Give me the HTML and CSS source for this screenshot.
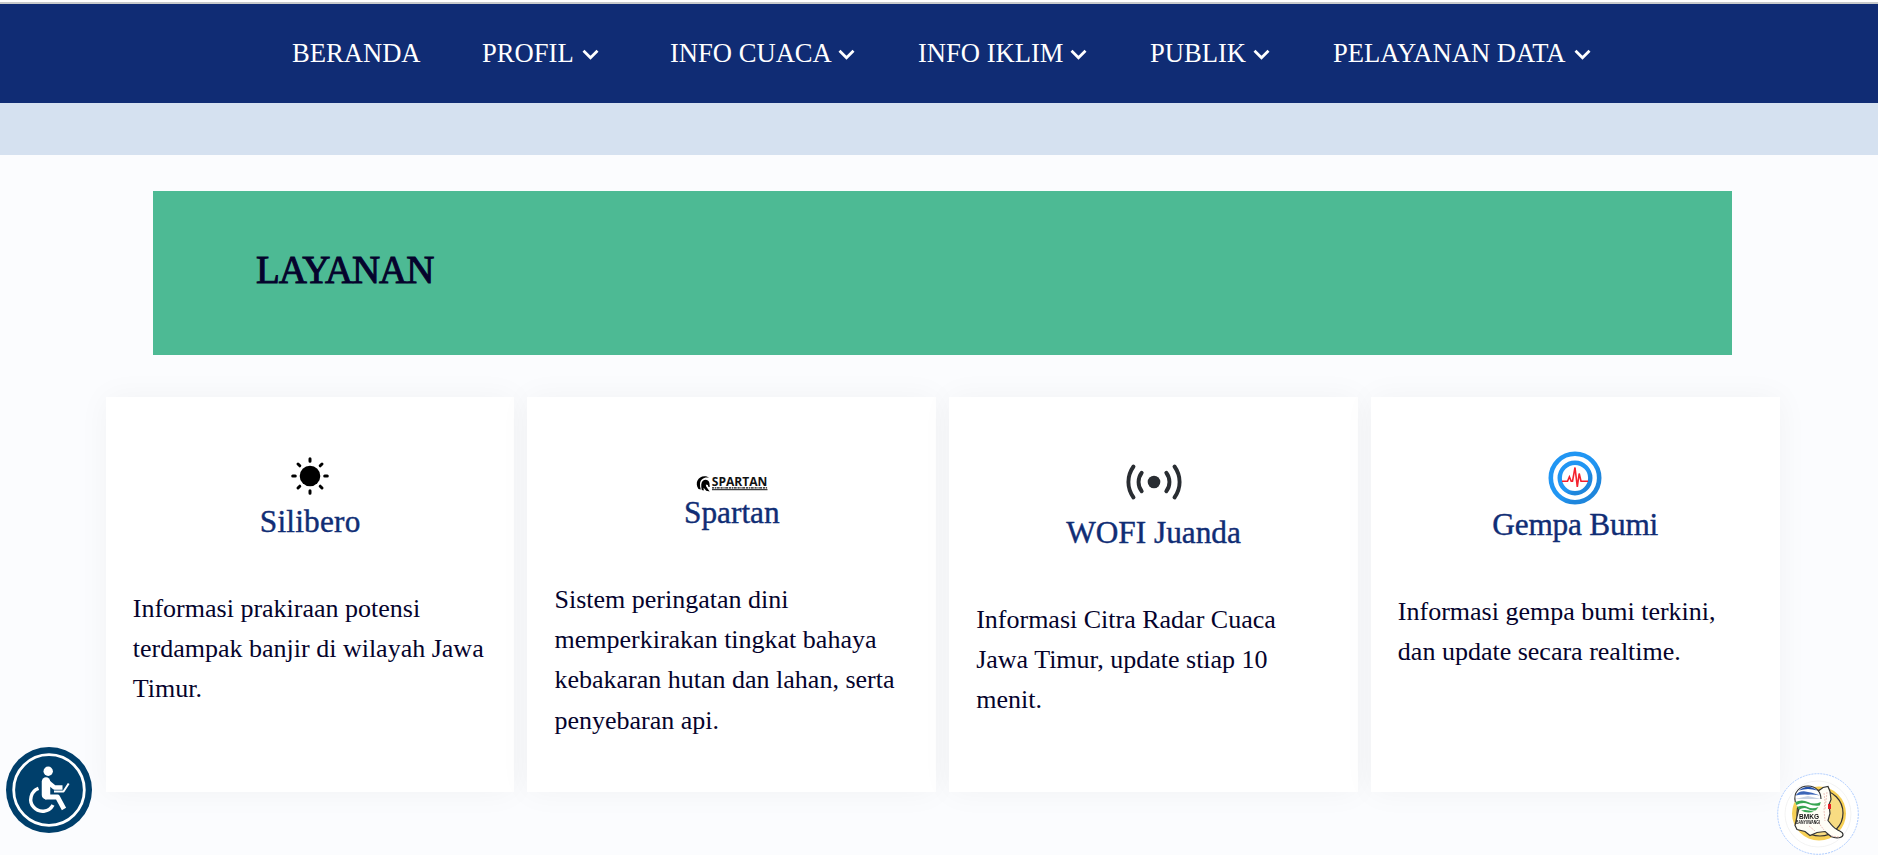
FILE: index.html
```html
<!DOCTYPE html>
<html lang="id">
<head>
<meta charset="utf-8">
<title>Layanan</title>
<link rel="stylesheet" href="styles.css">
</head>
<body>
<header class="navbar">
  <nav class="menu">
    <a class="item">BERANDA</a>
    <a class="item profil">PROFIL<svg class="chev" viewBox="0 0 17 11"><path d="M1.500 1.800l7 7 7-7"/></svg></a>
    <a class="item cuaca">INFO CUACA<svg class="chev" viewBox="0 0 17 11"><path d="M1.500 1.800l7 7 7-7"/></svg></a>
    <a class="item iklim">INFO IKLIM<svg class="chev" viewBox="0 0 17 11"><path d="M1.500 1.800l7 7 7-7"/></svg></a>
    <a class="item publik">PUBLIK<svg class="chev" viewBox="0 0 17 11"><path d="M1.500 1.800l7 7 7-7"/></svg></a>
    <a class="item data">PELAYANAN DATA<svg class="chev" viewBox="0 0 17 11"><path d="M1.500 1.800l7 7 7-7"/></svg></a>
  </nav>
</header>
<div class="band"></div>
<main>
  <section class="banner"><h2>LAYANAN</h2></section>
  <section class="cards">
    <article class="card silibero">
      <svg class="icon" width="40" height="40" viewBox="-20 -20 40 40">
        <circle r="10.300"/>
        <g stroke="#000" stroke-width="3" stroke-linecap="round">
          <path d="M0-17.300v2.600M0 14.700v2.600M-17.300 0h2.600M14.700 0h2.600M-12-12l1.800 1.800M10.200 10.200l1.800 1.800M-12 12l1.800-1.800M10.200-10.200l1.800-1.800"/>
        </g>
      </svg>
      <h3>Silibero</h3>
      <p>Informasi prakiraan potensi terdampak banjir di wilayah Jawa Timur.</p>
    </article>
    <article class="card spartan">
      <svg class="icon" width="72" height="16" viewBox="0 0 72 16">
        <path d="M2.500 13C-1.500 7 2 .2 8.500.2c2.200 0 3.800.6 4.500 1.500-5-.9-8.500 1.600-9 6-.1 2 .2 4 .8 5.800z"/>
        <path d="M5.800 14c-1-4.500-.8-8 1.400-9.600 2.300-1.500 5.600-.4 6.200 2.600l.4 4-1.500-.3-.5-1.700-2-.5.4 2 1.700 2.500 1.800 2.500-3.500-.8-2.600-3 .2 2.800z"/>
        <text class="wordmark" x="15.800" y="10" textLength="55.500" lengthAdjust="spacingAndGlyphs">SPARTAN</text>
        <path d="M16 11.800h55.500" stroke="#111" stroke-width="1.300" stroke-dasharray="2.200 .7 1.200 .6 3 .8"/>
        <path d="M16 13.700h55.500" stroke="#111" stroke-width="1"/>
      </svg>
      <h3>Spartan</h3>
      <p>Sistem peringatan dini memperkirakan tingkat bahaya kebakaran hutan dan lahan, serta penyebaran api.</p>
    </article>
    <article class="card wofi">
      <svg class="icon" width="56" height="36" viewBox="-28 -18 56 36">
        <circle r="6.300" fill="#292d32"/>
        <g fill="none" stroke="#292d32" stroke-width="3.900" stroke-linecap="round">
          <path d="M-20.500-15.500C-27.300-6-27.300 6-20.500 15.500M20.500-15.500C27.300-6 27.300 6 20.500 15.500M-12.300-9.300C-16.500-3.800-16.500 3.800-12.300 9.300M12.300-9.300C16.500-3.800 16.500 3.800 12.300 9.300"/>
        </g>
      </svg>
      <h3>WOFI Juanda</h3>
      <p>Informasi Citra Radar Cuaca Jawa Timur, update stiap 10 menit.</p>
    </article>
    <article class="card gempa">
      <svg class="icon" width="54" height="54" viewBox="-27 -27 54 54">
        <defs><linearGradient id="blue" x1="0" y1="0" x2="1" y2="1"><stop offset=".55" stop-color="#2196f3"/><stop offset=".72" stop-color="#1e86dc"/></linearGradient></defs>
        <circle r="24.200" fill="none" stroke="url(#blue)" stroke-width="4.600"/>
        <circle r="15.300" fill="none" stroke="url(#blue)" stroke-width="4.400"/>
        <path d="M-13 3.300h5.500l1.900-4.500 1.800 4.500h1.300L0-10.500 2.300 8.800 4.200-4.500 6 3.300h7" fill="none" stroke="#f4212d" stroke-width="1.600"/>
      </svg>
      <h3>Gempa Bumi</h3>
      <p>Informasi gempa bumi terkini, dan update secara realtime.</p>
    </article>
  </section>
</main>
<a class="access" aria-label="Aksesibilitas">
  <svg width="86" height="86" viewBox="-43 -43 86 86">
    <circle r="43" fill="#003f6b"/>
    <circle r="35.300" fill="none" stroke="#fff" stroke-width="2.800"/>
    <circle cx="-.8" cy="-18.700" r="4.700" fill="#fff"/>
    <g fill="none" stroke="#fff" stroke-linejoin="round">
      <path d="M-3-8.500V5" stroke-width="8.500" stroke-linecap="round"/>
      <path d="M-3-9.500L5.500-2.500H13.500" stroke-width="4.300"/>
      <path d="M-4 7H8.500L15 19" stroke-width="4.800"/>
      <path d="M-10.500-1.600A11.800 11.800 0 1 0 4 15" stroke-width="3.400"/>
      <path d="M5 1.500h9.500L19.700-6.500" stroke-width="2"/>
    </g>
  </svg>
</a>
<a class="chat" aria-label="BMKG">
  <svg width="82" height="82" viewBox="-41 -41 82 82">
    <circle r="40.300" fill="#fff" stroke="#a9c9ff" stroke-dasharray="2 1"/>
    <circle r="33" fill="none" stroke="#eee" stroke-width=".7"/>
    <circle cx="1" cy="-.5" r="27" fill="#f6cf55"/>
    <circle cx="2" cy="-1" r="23" fill="#f8dc82" stroke="#333" stroke-width="1.200"/>
    <path d="M-16-18L-1-22 5-26.500l5-1 2 5 1 8-2 5 1 9-2 7c3 4 5 7 9 9 3 2 6 2 6 5s-5 4-9 3c-5-1-6-4-9-6l-8 1-7 3-5-4-8-2-2-4 2-9z" fill="#fffef6" stroke="#333" stroke-width="1.200"/>
    <circle cx="-10" cy="-15" r="13" fill="#fff"/>
    <path d="M-19-23.500q9-7.500 18 0-9-3-18 0z" fill="#2450a8"/>
    <path d="M-22.500-18.500q3-4.500 8.500-4.300 8 .8 16 4.300-7-1.300-12-.8-6-.5-12.500.8z" fill="#3b65b8"/>
    <path d="M-23-15l13-3 13 3z" fill="#c8d2e2"/>
    <path d="M-22.800-12q7-3 12.800 0t12.800 0l-1 3.500q-6 1-11.500-1.500t-12 1zM-21-7q6-2.500 10.500 0t11 0l-2.500 3.200q-4 1-8-1.200t-9 .7zM-17-3.500q5-1.500 13 1.200-7 2-13-1.200z" fill="#38a552"/>
    <path d="M-22.700-12C-25-22-18-28-10-28S3-22 3-15" fill="none" stroke="#333" stroke-width="1.100"/>
    <path d="M10-10h3v5h-3z" fill="#e51e25"/>
    <path d="M6-21l1 8-1 9 1 11M9-22l-2 18M0 8l6 8M-9 12l6 5M13 22l8 1" fill="none" stroke="#e3aaa4" stroke-width=".7" stroke-dasharray="2 1"/>
    <text class="bmkg" x="-19" y="4.600" textLength="20" lengthAdjust="spacingAndGlyphs">BMKG</text>
    <text class="bmkg small" x="-22" y="9.700" textLength="24" lengthAdjust="spacingAndGlyphs">BANYUWANGI</text>
  </svg>
</a>
</body>
</html>
```
FILE: styles.css
```css
* { box-sizing: border-box; }
body {
  margin: 0;
  height: 855px;
  overflow: hidden;
  background: #fbfcfe;
  color: #05032c;
  font-family: "Liberation Serif", "Times New Roman", serif;
}
body::before { content: ""; display: block; height: 2px; background: #fff; }
.navbar {
  height: 101px;
  border-top: 2px solid #c8cacb;
  background: #102c74;
}
.menu { display: flex; padding-left: 292px; height: 98px; align-items: center; }
.item {
  display: flex;
  align-items: center;
  justify-content: space-between;
  flex: none;
  width: 129px;
  color: #fff;
  font-size: 26.6px;
  line-height: 40px;
  white-space: nowrap;
}
.profil { width: 117px; margin-left: 61px; }
.cuaca { width: 185px; margin-left: 71px; }
.iklim { width: 169px; margin-left: 63px; }
.publik { width: 120px; margin-left: 63px; }
.data { width: 258px; margin-left: 63px; }
.chev { width: 17px; height: 11px; margin-top: 2px; fill: none; stroke: #fff; stroke-width: 2.8; }
.band { height: 52px; background: #d5e1f0; }
.banner {
  width: 1579px;
  height: 164px;
  margin: 36px 0 42px 153px;
  padding: 54px 0 0 103px;
  background: #4dba94;
}
h2 {
  margin: 0;
  font-size: 39px;
  line-height: 50px;
  font-weight: normal;
  letter-spacing: -1.1px;
  -webkit-text-stroke: 1px #05032c;
}
.cards { display: grid; grid-template-columns: repeat(4, 408.7px); gap: 13px; margin-left: 105.8px; }
.card {
  display: flex;
  flex-direction: column;
  align-items: center;
  height: 395px;
  padding: 0 27px;
  background: #fff;
  box-shadow: 0 0 30px rgba(20, 30, 50, .045);
}
.icon { display: block; flex: none; overflow: visible; }
.silibero { padding-top: 59px; }
.silibero .icon { margin-bottom: 6px; }
.silibero h3 { letter-spacing: .2px; }
.spartan { padding-top: 79px; }
.spartan .icon { margin-bottom: 1px; }
.wofi { padding-top: 67px; }
.wofi .icon { margin-bottom: 13px; }
.gempa { padding-top: 54px; }
.gempa h3 { letter-spacing: -.2px; }
h3 {
  margin: 0 0 47px;
  color: #102d75;
  font-size: 31.3px;
  line-height: 40px;
  font-weight: normal;
  -webkit-text-stroke: .4px #102d75;
}
p { margin: 0; align-self: stretch; font-size: 26px; line-height: 40.2px; }
.wordmark { font: 700 11.5px "Open Sans", sans-serif; fill: #111; }
.bmkg { font: bold 7px "Liberation Sans", sans-serif; fill: #111; }
.small { font-size: 4.8px; }
.access { position: fixed; left: 6px; top: 747px; line-height: 0; }
.chat { position: fixed; left: 1777px; top: 773px; line-height: 0; }
```
